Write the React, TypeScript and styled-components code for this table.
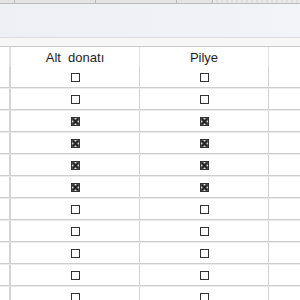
import styled, { createGlobalStyle } from 'styled-components'
import { Fragment } from 'react'

const GlobalStyle = createGlobalStyle`
  html, body {
    margin: 0;
    padding: 0;
    background: #ffffff;
    overflow: hidden;
  }
  body {
    font-family: "Liberation Sans", Arial, sans-serif;
  }
`

export const Page = styled.div`
  width: 300px;
  height: 300px;
  display: flex;
  flex-direction: column;
  overflow: hidden;
  & > * {
    flex: none;
  }
`

export const RulerStrip = styled.div`
  height: 3px;
  display: flex;
  background: #e4e4e4;
  border-bottom: 1px solid #bcbcbc;
`
export const RulerCell = styled.div<{ $w?: number; $soft?: boolean }>`
  width: ${p => (p.$w ? `${p.$w}px` : 'auto')};
  flex: ${p => (p.$w ? 'none' : '1')};
  border-right: ${p => (p.$w ? '1px solid #b8b8b8' : 'none')};
  background: ${p => (p.$soft ? 'repeating-linear-gradient(90deg, #e9e9e9 0 3px, #dedede 3px 5px)' : 'transparent')};
`

export const Ribbon = styled.div`
  height: 33px;
  background: linear-gradient(90deg, #eef0f6, #f1f2f8 70%, #f3f4fa);
  border-bottom: 1px solid #dcdcdc;
`
export const Spacer = styled.div`
  height: 8px;
  background: #f7f7f7;
  border-bottom: 1px solid #c9c9c9;
`

export const Grid = styled.div`
  display: grid;
  grid-template-columns: 11px 129px 129px 1fr;
`
export const Cell = styled.div<{ $head?: boolean }>`
  height: ${p => (p.$head ? '20px' : '21px')};
  display: flex;
  align-items: center;
  justify-content: center;
  border-right: 1px solid ${p => (p.$head ? '#e2e2e2' : '#d2d2d2')};
  border-bottom: ${p => (p.$head ? 'none' : '1px solid #ececec')};
  box-shadow: ${p => (p.$head ? 'none' : 'inset 0 -1px 0 #cdcdcd')};
  font-size: 13px;
  color: #1e1e1e;
  white-space: pre;
  &:nth-child(4n) {
    border-right: none;
  }
`
export const RowHead = styled(Cell)`
  border-right: 2px solid ${p => (p.$head ? '#e2e2e2' : '#d4d4d4')};
`

function CheckBox({ checked }: { checked: boolean }) {
  return (
    <svg width="9" height="9" viewBox="0 0 9 9">
      <rect x="0.5" y="0.5" width="8" height="8" fill="#fff" stroke="#333" strokeWidth="1" />
      {checked && (
        <>
          <rect x="1" y="1" width="7" height="7" fill="#7a7a7a" />
          <path d="M1.5 1.5 L7.5 7.5 M7.5 1.5 L1.5 7.5" stroke="#1c1c1c" strokeWidth="1.6" />
          <path d="M4.5 1.2 L4.5 1.9 M4.5 7.1 L4.5 7.8 M1.2 4.5 L1.9 4.5 M7.1 4.5 L7.8 4.5" stroke="#fff" strokeWidth="1.2" />
        </>
      )}
    </svg>
  )
}

const rows = [false, false, true, true, true, true, false, false, false, false, false]

export default function App() {
  return (
    <Page>
      <GlobalStyle />
      <RulerStrip>
        <RulerCell $w={14} />
        <RulerCell $w={80} />
        <RulerCell $w={80} />
        <RulerCell $w={35} />
        <RulerCell $soft />
      </RulerStrip>
      <Ribbon />
      <Spacer />
      <Grid>
        <RowHead $head />
        <Cell $head>Alt  donatı</Cell>
        <Cell $head>Pilye</Cell>
        <Cell $head />
        {rows.map((on, i) => (
          <Fragment key={i}>
            <RowHead />
            <Cell><CheckBox checked={on} /></Cell>
            <Cell><CheckBox checked={on} /></Cell>
            <Cell />
          </Fragment>
        ))}
      </Grid>
    </Page>
  )
}
